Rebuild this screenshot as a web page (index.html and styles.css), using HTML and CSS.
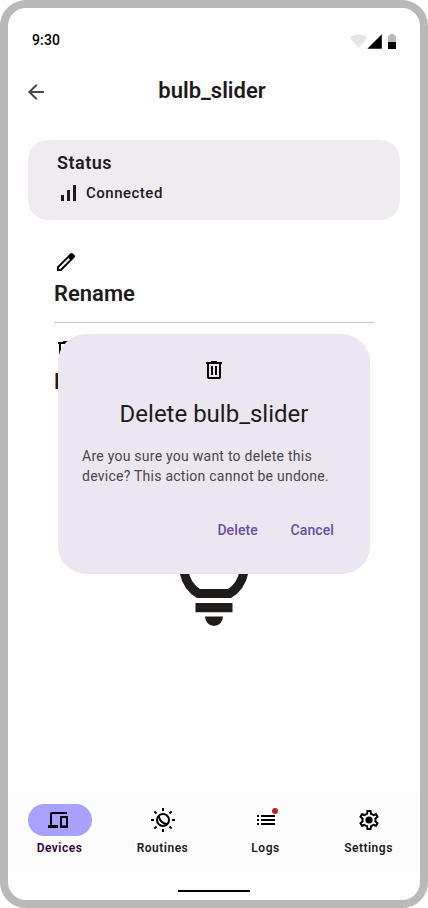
FILE: index.html
```html
<!DOCTYPE html>
<html lang="en">
<head>
<meta charset="utf-8">
<title>bulb_slider</title>
<link rel="stylesheet" href="styles.css">
</head>
<body>
<div class="phone">
  <header class="statusbar">
    <span class="time">9:30</span>
    <svg class="indicators" width="48" height="16" viewBox="0 0 48 16">
      <path fill="#e5e5e5" d="M0 3.800C5-.9 12.500-.9 17.300 3.800L8.600 14.200z"/>
      <path d="M17.300 14.700L31.800 .2V14.700z"/>
      <path fill="#b9b9b9" d="M38 1.500h2V0h4v1.500h2v7h-8z"/>
      <path d="M38 8h8v7h-8z"/>
    </svg>
  </header>
  <div class="appbar">
    <svg class="back" width="24" height="24" viewBox="0 0 24 24"><path fill="#49454f" d="M7.830 13L13.430 18.600 12 20 4 12 12 4 13.430 5.400 7.830 11H20V13z"/></svg>
    <h1>bulb_slider</h1>
  </div>
  <section class="card">
    <h2>Status</h2>
    <div class="connection">
      <svg width="24" height="24" viewBox="0 0 24 24"><path fill="#1d1b20" d="M5 14h3v6H5zM11 9h3v11h-3zM17 4h3v16h-3z"/></svg>
      <span>Connected</span>
    </div>
  </section>
  <main class="content">
    <div class="item">
      <svg width="24" height="24" viewBox="0 0 24 24"><path fill-rule="evenodd" d="M3 21V16.750L16.200 3.575Q16.800 3 17.600 3 18.400 3 19 3.600L20.400 5Q21 5.600 21 6.400 21 7.200 20.425 7.800L7.250 21zM5 19H6.400L15.900 9.500 14.500 8.100 5 17.600z"/></svg>
      <h3>Rename</h3>
    </div>
    <div class="item">
      <svg width="24" height="24" viewBox="0 0 24 24"><path d="M7 21Q6.175 21 5.588 20.413 5 19.825 5 19V6H4V4H9V3H15V4H20V6H19V19Q19 19.825 18.413 20.413 17.825 21 17 21zM17 6H7V19H17zM9 17H11V8H9zM13 17H15V8H13z"/></svg>
      <h3>Delete</h3>
    </div>
    <svg class="bulb" width="70" height="94" viewBox="0 0 70 94">
      <path fill="#211c1c" fill-rule="evenodd" d="M18 66A34.500 34.500 0 1 1 52 66zM21 57H49A25.700 25.700 0 1 0 21 57zM16.500 71h37v9.200h-37zM26 84.500h18a9 9.500 0 0 1-18 0z"/>
    </svg>
    <div class="dialog" role="dialog">
      <svg width="24" height="24" viewBox="0 0 24 24"><path d="M7 21Q6.175 21 5.588 20.413 5 19.825 5 19V6H4V4H9V3H15V4H20V6H19V19Q19 19.825 18.413 20.413 17.825 21 17 21zM17 6H7V19H17zM9 17H11V8H9zM13 17H15V8H13z"/></svg>
      <h2>Delete bulb_slider</h2>
      <p>Are you sure you want to delete this<br>device? This action cannot be undone.</p>
      <div class="actions"><button>Delete</button><button>Cancel</button></div>
    </div>
  </main>
  <nav class="nav">
    <a class="tab active">
      <span class="pill"><svg width="24" height="24" viewBox="0 0 24 24"><path d="M2 20V17H4V6Q4 5.175 4.588 4.588 5.175 4 6 4H21V6H6V17H12V20zM15 20Q14.575 20 14.288 19.713 14 19.425 14 19V9Q14 8.575 14.288 8.288 14.575 8 15 8H21Q21.425 8 21.713 8.288 22 8.575 22 9V19Q22 19.425 21.713 19.713 21.425 20 21 20zM16 17.500H20V10H16z"/></svg></span>
      <span>Devices</span>
    </a>
    <a class="tab">
      <span class="pill"><svg width="24" height="24" viewBox="0 0 24 24"><g fill="none" stroke="#000" stroke-width="2"><circle cx="12" cy="12" r="6"/><path d="M7.700 8C8.300 12.500 12 16 16.500 16"/><path d="M12 0v3M12 21v3M0 12h3M21 12h3M3.400 3.400l2.100 2.100M18.500 18.500l2.100 2.100M3.400 20.600l2.100-2.100M18.500 5.500l2.100-2.100"/></g></svg></span>
      <span>Routines</span>
    </a>
    <a class="tab">
      <span class="pill"><svg width="24" height="24" viewBox="0 0 24 24"><path d="M3 7h2v2H3zM3 11h2v2H3zM3 15h2v2H3zM7 7h14v2H7zM7 11h14v2H7zM7 15h14v2H7z"/></svg><i class="badge"></i></span>
      <span>Logs</span>
    </a>
    <a class="tab">
      <span class="pill settings"><svg width="24" height="24" viewBox="0 0 24 24"><path fill-rule="evenodd" d="M19.430 12.980c.04-.32.07-.64.07-.98 0-.34-.03-.66-.07-.98l2.110-1.650c.19-.15.24-.42.12-.64l-2-3.460c-.09-.16-.26-.25-.44-.25-.06 0-.12.01-.17.03l-2.490 1c-.52-.4-1.080-.73-1.690-.98l-.38-2.650C14.460 2.180 14.250 2 14 2h-4c-.25 0-.46.18-.49.42l-.38 2.650c-.61.25-1.170.59-1.690.98l-2.490-1c-.06-.02-.12-.03-.18-.03-.17 0-.34.09-.43.25l-2 3.460c-.13.22-.07.49.12.64l2.110 1.650c-.04.32-.07.65-.07.98 0 .33.03.66.07.98l-2.110 1.650c-.19.15-.24.42-.12.64l2 3.460c.09.16.26.25.44.25.06 0 .12-.01.17-.03l2.490-1c.52.4 1.080.73 1.690.98l.38 2.650c.03.24.24.42.49.42h4c.25 0 .46-.18.49-.42l.38-2.650c.61-.25 1.170-.59 1.690-.98l2.490 1c.06.02.12.03.18.03.17 0 .34-.09.43-.25l2-3.460c.12-.22.07-.49-.12-.64zM17.450 11.270c.04.31.05.52.05.73 0 .21-.02.43-.05.73l-.14 1.130.89.7 1.080.84-.7 1.210-1.270-.51-1.040-.42-.9.680c-.43.32-.84.56-1.250.73l-1.060.43-.16 1.130-.2 1.350h-1.400l-.19-1.350-.16-1.130-1.060-.43c-.43-.18-.83-.41-1.230-.71l-.91-.7-1.060.43-1.270.51-.7-1.210 1.080-.84.89-.7-.14-1.130c-.03-.31-.05-.54-.05-.74s.02-.43.05-.73l.14-1.130-.89-.7-1.080-.84.7-1.210 1.270.51 1.040.42.9-.68c.43-.32.84-.56 1.250-.73l1.060-.43.16-1.130.2-1.350h1.390l.19 1.350.16 1.130 1.060.43c.43.18.83.41 1.230.71l.91.7 1.060-.43 1.270-.51.7 1.210-1.070.85-.89.7z"/><circle cx="12" cy="12" r="3.600"/></svg></span>
      <span>Settings</span>
    </a>
  </nav>
  <div class="gesture"><span></span></div>
</div>
</body>
</html>
```

FILE: styles.css
```css
* { box-sizing: border-box; margin: 0; padding: 0; }
body { font-family: Roboto, sans-serif; background: #fff; color: #1d1b20; }
svg { display: block; flex: none; }
.phone {
  width: 428px; height: 908px;
  border: 8px solid #b9b9b9; border-radius: 26px;
  background: #fff; overflow: hidden;
  display: flex; flex-direction: column;
}
.statusbar {
  height: 52px; padding: 12px 24px 0;
  display: flex; justify-content: space-between;
}
.time { font-size: 14px; line-height: 40px; font-weight: 500; letter-spacing: .14px; color: #000; }
.indicators { margin: 14px -2px 0 0; }
.appbar {
  height: 64px; padding: 0 16px;
  display: grid; grid-template-columns: 24px 1fr 28px; align-items: center;
}
.appbar h1 { font-size: 22px; line-height: 28px; font-weight: 600; text-align: center; margin-top: -3px; }
.card {
  height: 80px; margin: 16px 20px 0; padding: 11px 29px;
  background: #f0ebf1; border-radius: 20px;
}
.card h2 { font-size: 18px; line-height: 24px; font-weight: 600; letter-spacing: .5px; }
.connection {
  display: flex; align-items: center; gap: 6px; margin-top: 6px; margin-left: -1px;
  font-size: 15px; line-height: 24px; font-weight: 500; letter-spacing: .5px;
}
.content { position: relative; flex: 1; padding: 30px 46px 0; }
.item { height: 73px; margin-bottom: 15px; border-bottom: 1px solid #c4c3d0; }
.item h3 { font-size: 22px; line-height: 28px; font-weight: 600; margin-top: 6px; }
.item + .item { border: 0; }
.bulb { position: absolute; left: 171px; top: 312px; }
.dialog {
  position: absolute; left: 50px; top: 114px; width: 312px; height: 240px;
  padding: 24px; border-radius: 28px; background: #ece6f0;
  display: flex; flex-direction: column; align-items: center;
}
.dialog h2 { font-size: 24px; line-height: 32px; font-weight: 400; margin-top: 16px; }
.dialog p { align-self: flex-start; margin-top: 16px; font-size: 14px; line-height: 20px; letter-spacing: .25px; color: #49454f; white-space: nowrap; }
.actions { align-self: flex-end; display: flex; gap: 8px; margin-top: 24px; }
.actions button {
  border: 0; background: none; height: 40px; padding: 0 12px;
  font: 500 14px/20px Roboto, sans-serif; letter-spacing: .1px; color: #6750a4;
}
.actions button:first-child { padding-right: 12.700px; }
.nav { height: 80px; background: #fcfcfc; display: grid; grid-template-columns: repeat(4, 1fr); }
.tab {
  display: flex; flex-direction: column; align-items: center; padding-top: 12px; gap: 4px;
  font-size: 12px; line-height: 16px; font-weight: 600; letter-spacing: .5px;
}
.pill { position: relative; width: 64px; height: 32px; border-radius: 16px; display: grid; place-items: center; }
.active { color: #310040; }
.active .pill { background: #a8a1ff; }
.active svg { margin-left: -3px; }
.settings svg { margin-left: 0; }
.badge { position: absolute; left: 38px; top: 4px; width: 6px; height: 6px; border-radius: 50%; background: #b3261e; }
.gesture { height: 28px; padding-top: 18px; display: flex; justify-content: center; }
.gesture span { width: 72px; height: 2px; background: #000; }
```
